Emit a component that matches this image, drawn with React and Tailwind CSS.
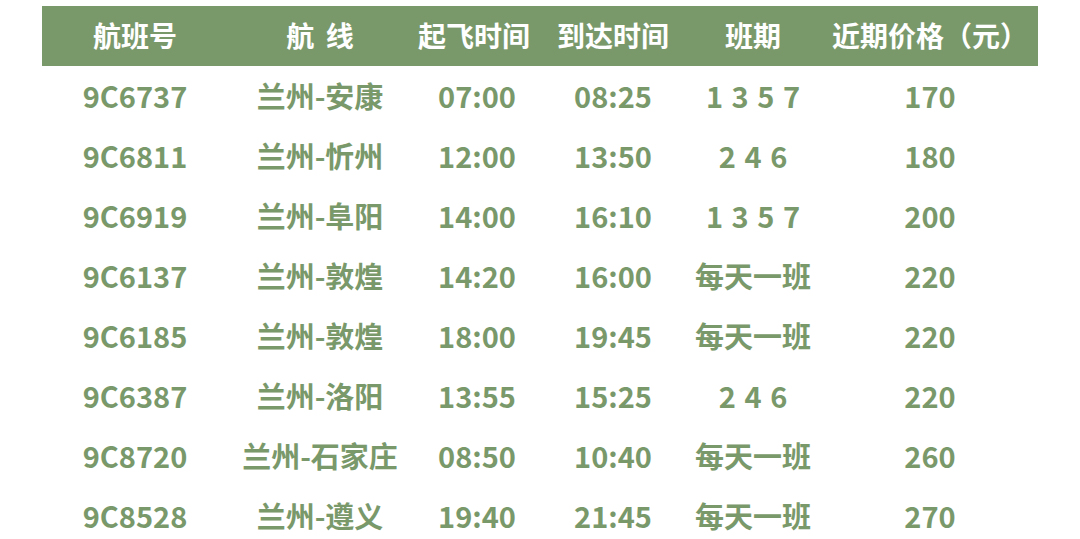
const rows = [
  ["9C6737", "兰州-安康", "07:00", "08:25", "1 3 5 7", "170"],
  ["9C6811", "兰州-忻州", "12:00", "13:50", "2 4 6", "180"],
  ["9C6919", "兰州-阜阳", "14:00", "16:10", "1 3 5 7", "200"],
  ["9C6137", "兰州-敦煌", "14:20", "16:00", "每天一班", "220"],
  ["9C6185", "兰州-敦煌", "18:00", "19:45", "每天一班", "220"],
  ["9C6387", "兰州-洛阳", "13:55", "15:25", "2 4 6", "220"],
  ["9C8720", "兰州-石家庄", "08:50", "10:40", "每天一班", "260"],
  ["9C8528", "兰州-遵义", "19:40", "21:45", "每天一班", "270"],
];

const cols = "grid grid-cols-[186px_184px_130px_142px_138px_216px]";

export default function App() {
  return (
    <div
      className="w-[1080px] h-[539px] bg-white overflow-hidden pt-[6px] pl-[42px]"
      style={{ fontFamily: '"Noto Sans CJK SC", "Noto Sans", sans-serif' }}
    >
      <div className={`${cols} w-[996px] h-[60px] bg-[#7a996b] text-white text-[28px] font-bold items-center pb-[2px]`}>
        <div className="text-center">航班号</div>
        <div className="text-center [word-spacing:5px]">航 线</div>
        <div className="text-center pr-[6px]">起飞时间</div>
        <div className="text-center">到达时间</div>
        <div className="text-center">班期</div>
        <div className="text-center">近期价格（元）</div>
      </div>
      <div>
        {rows.map((r, i) => (
          <div key={i} className={`${cols} w-[996px] h-[60px] items-center text-[#7a996b] text-[29px] font-bold`}>
            {r.map((c, j) => (
              <div key={j} className={`text-center whitespace-pre ${j === 4 ? "[word-spacing:2px]" : ""}`}>{c}</div>
            ))}
          </div>
        ))}
      </div>
    </div>
  );
}
